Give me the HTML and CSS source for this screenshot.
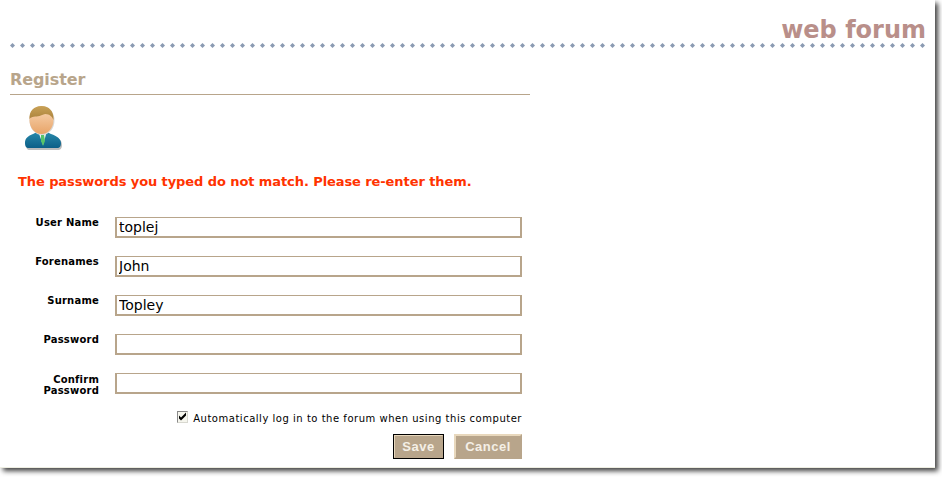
FILE: index.html
```html
<!DOCTYPE html>
<html lang="en">

<head>
  <meta charset="UTF-8">
  <meta name="viewport" content="width=device-width, initial-scale=1.0">

  <title>Register</title>
  <link rel="stylesheet" href="styles.css">
</head>

<body>
<div id="forum-window">
  <div class="site-title">web forum</div>
  <div class="dots"></div>

  <div id="register-panel">
    <h3>Register</h3>

    <svg class="user-icon" width="40" height="46" viewBox="0 0 40 46" aria-hidden="true">
      <defs>
        <linearGradient id="face" x1="0" y1="0" x2="0" y2="1">
          <stop offset="0" stop-color="#f9d9b8"/>
          <stop offset="1" stop-color="#e8a468"/>
        </linearGradient>
        <linearGradient id="suit" x1="0" y1="0" x2="0" y2="1">
          <stop offset="0" stop-color="#2a8cad"/>
          <stop offset="1" stop-color="#0c5f88"/>
        </linearGradient>
        <linearGradient id="hair" x1="0" y1="0" x2="0" y2="1">
          <stop offset="0" stop-color="#c9a257"/>
          <stop offset="1" stop-color="#a9803a"/>
        </linearGradient>
      </defs>
      <path d="M2 39c0-5 3-7 8-9l6-3h6l6 3c6 2 10 5 10 10 0 4-2 5-4 5H6c-3 0-4-2-4-6z" fill="#bdbdbd"/>
      <path d="M1 38c0-5 3-7 8-9l6-3h6l6 3c6 2 10 5 10 9 0 3-1 5-4 5H5c-3 0-4-2-4-5z" fill="url(#suit)"/>
      <path d="M14 26l5 14 4-14z" fill="#eef4ee"/>
      <path d="M17 30h3l1 6-2 5-2-5z" fill="#56c46a"/>
      <ellipse cx="18" cy="15.500" rx="12.500" ry="14.500" fill="#d8d8d8"/>
      <ellipse cx="17.500" cy="15" rx="12" ry="14" fill="url(#face)"/>
      <path d="M5.500 14C5 6 10 1 17.500 1S30 6 29.500 15c-1-3-4-6-8-6-2 0-3 1-6 2-4 1-8 0-10 3z" fill="url(#hair)"/>
    </svg>

    <p class="error-message">The passwords you typed do not match. Please re-enter them.</p>

    <form id="register-form">
      <div class="form-row">
        <label for="user-name">User Name</label>
        <input type="text" id="user-name" value="toplej">
      </div>
      <div class="form-row">
        <label for="forenames">Forenames</label>
        <input type="text" id="forenames" value="John">
      </div>
      <div class="form-row">
        <label for="surname">Surname</label>
        <input type="text" id="surname" value="Topley">
      </div>
      <div class="form-row">
        <label for="password">Password</label>
        <input type="password" id="password">
      </div>
      <div class="form-row">
        <label for="confirm-password" class="label-tall">Confirm Password</label>
        <input type="password" id="confirm-password">
      </div>

      <div class="auto-login">
        <input type="checkbox" id="auto-login" checked>
        <label for="auto-login">Automatically log in to the forum when using this computer</label>
      </div>

      <div class="form-actions">
        <button type="button" class="btn btn-default">Save</button>
        <button type="button" class="btn btn-cancel">Cancel</button>
      </div>
    </form>
  </div>
</div>
</body>

</html>
```

FILE: styles.css
```css
:root {
  --color-tan: #b8a58b;
  --color-tan-light: #e8d8bd;
  --color-title: #b98f8a;
}

html,
body {
  margin: 0;
  padding: 0;
  height: 100%;
  overflow: hidden;
  background-color: white;
  font-family: "DejaVu Sans", Verdana, sans-serif;
}

#forum-window {
  width: 935px;
  height: 468px;
  box-sizing: border-box;
  padding: 15px 9px 0 10px;
  background-color: white;
  border-bottom: 1px solid #eeeee2;
  box-shadow: 3px 3px 5px rgba(0, 0, 0, 0.75);
}

.site-title {
  height: 28px;
  line-height: 30px;
  text-align: right;
  font-size: 24px;
  font-weight: bold;
  color: var(--color-title);
}

.dots {
  height: 5px;
  background-image: url("data:image/svg+xml,%3Csvg xmlns='http://www.w3.org/2000/svg' width='10' height='5'%3E%3Cpath d='M2.500 0L5 2.500 2.500 5 0 2.500z' fill='%238a9ab2'/%3E%3C/svg%3E");
  background-repeat: repeat-x;
}

#register-panel {
  width: 520px;
  margin-top: 21px;
}

h3 {
  margin: 0;
  height: 25px;
  line-height: 22px;
  font-size: 16px;
  font-weight: bold;
  letter-spacing: -0.1px;
  color: var(--color-tan);
  border-bottom: 1px solid var(--color-tan);
}

.user-icon {
  display: block;
  margin: 10px 0 0 14px;
}

.error-message {
  margin: 21px 0 0 8px;
  height: 20px;
  line-height: 20px;
  font-size: 13px;
  font-weight: bold;
  letter-spacing: -0.085px;
  color: #ff3300;
}

#register-form {
  margin-top: 25px;
}

.form-row {
  display: flex;
  height: 39px;
  gap: 15px;
}

.form-row label {
  width: 89px;
  margin-right: 1px;
  text-align: right;
  font-size: 10px;
  line-height: 11px;
  font-weight: bold;
  letter-spacing: 0.2px;
  color: black;
}

.form-row .label-tall {
  padding-top: 1px;
}

.form-row input {
  width: 407px;
  height: 21px;
  box-sizing: border-box;
  margin: 0;
  padding: 1px 2px;
  font-family: "DejaVu Sans", Verdana, sans-serif;
  font-size: 14px;
  color: black;
  background-color: white;
  border: 1px solid var(--color-tan);
  border-width: 1px 2px 2px 2px;
  outline: none;
}

.auto-login {
  display: flex;
  justify-content: flex-end;
  align-items: center;
  width: 512px;
  margin-top: -2px;
  height: 16px;
  font-size: 10px;
  letter-spacing: 0.52px;
  color: black;
}

.auto-login input {
  appearance: none;
  box-sizing: border-box;
  margin: 0 5px 3px 0;
  width: 11px;
  height: 12px;
  border: 1px solid #8a8a8a;
  border-right-color: #d8d8d0;
  border-bottom-color: #d8d8d0;
  background: #f6f6ee url("data:image/svg+xml,%3Csvg xmlns='http://www.w3.org/2000/svg' width='9' height='9'%3E%3Cpath d='M1 3.500l2 2 5-5v3L3 8.500 1 6.500z' fill='black'/%3E%3C/svg%3E") no-repeat center;
}

.form-actions {
  display: flex;
  justify-content: flex-end;
  gap: 10px;
  width: 512px;
  margin-top: 8px;
}

.btn {
  height: 25px;
  padding: 0;
  box-sizing: border-box;
  font-family: "Liberation Sans", Arial, sans-serif;
  font-size: 13px;
  font-weight: bold;
  letter-spacing: 0.5px;
  color: #f4efe6;
  background-color: var(--color-tan);
  border: 2px solid var(--color-tan-light);
  border-right-color: var(--color-tan);
  border-bottom-color: var(--color-tan);
}

.btn-default {
  width: 51px;
  outline: 1px solid black;
  outline-offset: -1px;
}

.btn-cancel {
  width: 68px;
}
```
